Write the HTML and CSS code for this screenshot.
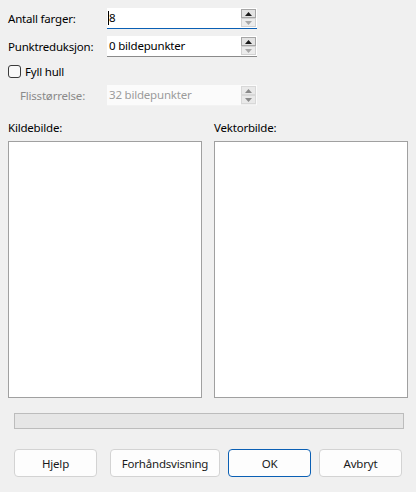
FILE: index.html
```html
<!DOCTYPE html>
<html>
<head>
<meta charset="utf-8">
<link rel="stylesheet" href="styles.css">
</head>
<body>
<div class="dialog">
  <div class="fields">
    <div class="row">
      <span class="lbl">Antall farger:</span>
      <div class="spinbox focused">
        <div class="value"><span class="caret"></span>8</div>
        <div class="spin">
          <div class="sbtn active"><svg width="7" height="4" viewBox="0 0 7 4"><path d="M0 4 L3.5 0 L7 4 Z" fill="#1a1a1a"/></svg></div>
          <div class="sbtn"><svg width="7" height="4" viewBox="0 0 7 4"><path d="M0 0 L7 0 L3.5 4 Z" fill="#a8a8a8"/></svg></div>
        </div>
      </div>
    </div>
    <div class="row">
      <span class="lbl">Punktreduksjon:</span>
      <div class="spinbox">
        <div class="value">0 bildepunkter</div>
        <div class="spin">
          <div class="sbtn active"><svg width="7" height="4" viewBox="0 0 7 4"><path d="M0 4 L3.5 0 L7 4 Z" fill="#1a1a1a"/></svg></div>
          <div class="sbtn"><svg width="7" height="4" viewBox="0 0 7 4"><path d="M0 0 L7 0 L3.5 4 Z" fill="#a8a8a8"/></svg></div>
        </div>
      </div>
    </div>
    <div class="checkrow">
      <span class="checkbox"></span>
      <span class="checklabel">Fyll hull</span>
    </div>
    <div class="row disabled">
      <span class="lbl indent">Flisstørrelse:</span>
      <div class="spinbox off">
        <div class="value">32 bildepunkter</div>
        <div class="spin">
          <div class="sbtn"><svg width="7" height="4" viewBox="0 0 7 4"><path d="M0 4 L3.5 0 L7 4 Z" fill="#8a8a8a"/></svg></div>
          <div class="sbtn"><svg width="7" height="4" viewBox="0 0 7 4"><path d="M0 0 L7 0 L3.5 4 Z" fill="#8a8a8a"/></svg></div>
        </div>
      </div>
    </div>
  </div>

  <div class="previews">
    <div class="pcol">
      <div class="plabel">Kildebilde:</div>
      <div class="pbox"></div>
    </div>
    <div class="pcol">
      <div class="plabel">Vektorbilde:</div>
      <div class="pbox"></div>
    </div>
  </div>

  <div class="progress"></div>

  <div class="buttons">
    <button class="btn help">Hjelp</button>
    <button class="btn preview">Forhåndsvisning</button>
    <button class="btn ok">OK</button>
    <button class="btn cancel">Avbryt</button>
  </div>
</div>
</body>
</html>
```

FILE: styles.css
```css
html, body {
  margin: 0;
  padding: 0;
  background: #f0f0f0;
}

body {
  font-family: "Segoe UI", "Noto Sans", sans-serif;
  font-size: 11.5px;
  letter-spacing: -0.2px;
  color: #000;
}

.dialog {
  width: 416px;
  height: 492px;
  box-sizing: border-box;
  padding: 8px 8px 0 8px;
}

.fields {
  display: flex;
  flex-direction: column;
}

.row {
  display: flex;
  align-items: center;
  height: 21px;
}

.row + .row {
  margin-top: 7px;
}

.lbl {
  width: 99px;
  line-height: 16px;
}

.lbl.indent {
  box-sizing: border-box;
  padding-left: 12px;
}

.disabled .lbl {
  color: #8a8a8a;
}

.spinbox {
  position: relative;
  width: 150px;
  height: 21px;
  box-sizing: border-box;
  background: #fff;
  border-bottom: 1px solid #8a8a8a;
  display: flex;
}

.spinbox.focused {
  border-bottom: 1px solid #0a5fb4;
}

.spinbox.off {
  background: #fbfbfb;
  border-bottom: 1px solid #f3f3f3;
  color: #9c9c9c;
}

.value {
  flex: 1;
  position: relative;
  padding-left: 2px;
  line-height: 20px;
}

.caret {
  position: absolute;
  left: 1px;
  top: 3px;
  width: 1px;
  height: 14px;
  background: #000;
}

.spin {
  width: 15px;
  margin: 1px 1px 0 0;
  display: flex;
  flex-direction: column;
}

.sbtn {
  height: 9px;
  box-sizing: border-box;
  border: 1px solid #d2d2d2;
  background: #ececec;
  display: flex;
  align-items: center;
  justify-content: center;
}

.sbtn.active {
  border-color: #a6a6a6;
  background: #e3e3e3;
}

.off .spin {
  background: #f0f0f0;
}

.off .sbtn {
  border-color: #d8d8d8;
  background: #e9e9e9;
}

.checkrow {
  display: flex;
  align-items: center;
  height: 15px;
  margin-top: 7px;
  margin-bottom: 6px;
}

.checkbox {
  width: 13px;
  height: 13px;
  box-sizing: border-box;
  border: 1px solid #3a3a3a;
  border-radius: 3px;
  background: #f8f8f8;
}

.checklabel {
  margin-left: 4px;
  line-height: 15px;
}

.previews {
  display: grid;
  grid-template-columns: 194px 194px;
  column-gap: 12px;
  margin-top: 14px;
}

.plabel {
  line-height: 16px;
}

.pbox {
  margin-top: 5px;
  height: 257px;
  box-sizing: border-box;
  border: 1px solid #a0a0a0;
  background: #fff;
}

.progress {
  margin: 15px 4px 0 6px;
  height: 16px;
  box-sizing: border-box;
  border: 1px solid #bcbcbc;
  background: #e6e6e6;
}

.buttons {
  display: flex;
  margin-top: 20px;
  padding-left: 6px;
}

.btn {
  height: 28px;
  box-sizing: border-box;
  border: 1px solid #d3d3d3;
  border-radius: 4px;
  background: #fdfdfd;
  font-family: "Segoe UI", "Noto Sans", sans-serif;
  font-size: 11.5px;
  letter-spacing: -0.2px;
  color: #1a1a1a;
  padding: 0;
  width: 83px;
}

.btn.preview {
  width: 110px;
  margin-left: 13px;
}

.btn.ok {
  margin-left: 8px;
  border-color: #0a5fb4;
}

.btn.cancel {
  margin-left: 8px;
}
```
